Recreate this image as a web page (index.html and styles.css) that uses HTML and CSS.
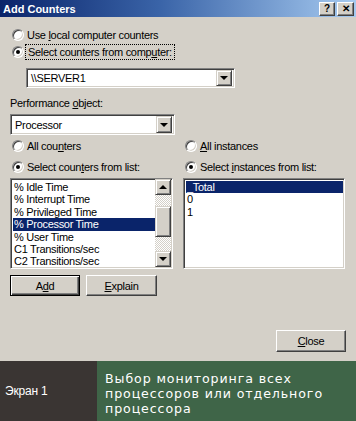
FILE: index.html
```html
<!DOCTYPE html>
<html lang="ru">
<head>
  <meta charset="UTF-8" />
  <title>Add Counters</title>
  <link rel="stylesheet" href="styles.css">
</head>
<body>

<div class="window">
  <div class="titlebar">
    <span class="title">Add Counters</span>
    <span class="tbtn">?</span>
    <span class="tbtn close">&#x2715;</span>
  </div>

  <div class="dialog">
    <div class="opt"><span class="radio"></span><span>Use <u>l</u>ocal computer counters</span></div>
    <div class="opt"><span class="radio on"></span><span class="focus">Select counters from comp<u>u</u>ter:</span></div>

    <div class="combo server">
      <span class="val">\\SERVER1</span>
      <span class="drop"><i class="down"></i></span>
    </div>

    <div class="label">Performance <u>o</u>bject:</div>
    <div class="combo object">
      <span class="val">Processor</span>
      <span class="drop"><i class="down"></i></span>
    </div>

    <div class="cols">
      <div class="col">
        <div class="opt"><span class="radio"></span><span>All cou<u>n</u>ters</span></div>
        <div class="opt"><span class="radio on"></span><span>Select coun<u>t</u>ers from list:</span></div>
        <div class="list">
          <div class="items">
            <div>% Idle Time</div>
            <div>% Interrupt Time</div>
            <div>% Privileged Time</div>
            <div class="sel">% Processor Time</div>
            <div>% User Time</div>
            <div>C1 Transitions/sec</div>
            <div>C2 Transitions/sec</div>
          </div>
          <div class="scroll">
            <span class="sbtn"><i class="up"></i></span>
            <span class="track"></span>
            <span class="thumb"></span>
            <span class="track short"></span>
            <span class="sbtn"><i class="down"></i></span>
          </div>
        </div>
      </div>
      <div class="col">
        <div class="opt"><span class="radio"></span><span><u>A</u>ll instances</span></div>
        <div class="opt"><span class="radio on"></span><span>Select <u>i</u>nstances from list:</span></div>
        <div class="list">
          <div class="items">
            <div class="sel">_Total</div>
            <div>0</div>
            <div>1</div>
          </div>
        </div>
      </div>
    </div>

    <div class="actions">
      <span class="btn default">A<u>d</u>d</span>
      <span class="btn"><u>E</u>xplain</span>
    </div>

    <div class="footer">
      <span class="btn"><u>C</u>lose</span>
    </div>
  </div>
</div>

<div class="caption">
  <div class="screen-no">Экран 1</div>
  <div class="note">Выбор мониторинга всех<br>процессоров или отдельного<br>процессора</div>
</div>

</body>
</html>
```

FILE: styles.css
```css
body {
  margin: 0;
  width: 356px;
  height: 421px;
  overflow: hidden;
  background: #d4d0c8;
  font-family: "Liberation Sans", Arial, sans-serif;
  font-size: 11px;
  letter-spacing: -0.3px;
  color: #000;
}
u { text-decoration: underline; text-underline-offset: 1px; }

.window { height: 361px; background: #d4d0c8; display: flex; flex-direction: column; }

.titlebar {
  height: 17px;
  display: flex;
  align-items: center;
  padding: 0 2px 0 3px;
  background: linear-gradient(90deg, #0a246a, #3a64a8 45%, #a6caf0);
}
.title { flex: 1; color: #fff; font-weight: bold; font-size: 11px; letter-spacing: 0; }
.tbtn {
  width: 14px;
  height: 12px;
  margin-left: 2px;
  background: #d4d0c8;
  border: 1px solid;
  border-color: #fff #404040 #404040 #fff;
  box-shadow: inset -1px -1px #808080;
  font-weight: bold;
  font-size: 10px;
  line-height: 12px;
  text-align: center;
  letter-spacing: 0;
}
.tbtn.close { width: 15px; font-size: 10px; }

.dialog { flex: 1; padding: 10px 10px 0 10px; display: flex; flex-direction: column; }

.opt { height: 16px; display: flex; align-items: center; gap: 3px; padding-left: 2px; }
.opt + .opt { margin-top: 1px; }
.radio {
  width: 10px;
  height: 10px;
  border-radius: 50%;
  background: #fff;
  border: 1px solid;
  border-color: #808080 #fff #fff #808080;
  box-shadow: inset 1px 1px #404040, inset -1px -1px #d4d0c8;
  display: flex;
  align-items: center;
  justify-content: center;
  flex: none;
}
.radio.on::after { content: ""; width: 4px; height: 4px; border-radius: 50%; background: #000; }
.focus { outline: 1px dotted #000; outline-offset: 1px; padding: 0 1px; }

.combo {
  height: 16px;
  display: flex;
  align-items: center;
  background: #fff;
  border: 1px solid;
  border-color: #808080 #fff #fff #808080;
  box-shadow: inset 1px 1px #404040, inset -1px -1px #d4d0c8;
  padding: 1px 2px 1px 2px;
  box-sizing: content-box;
}
.combo .val { flex: 1; padding-left: 2px; }
.combo.server { width: 203px; margin: 8px 0 0 16px; }
.combo.object { width: 159px; height: 17px; }
.drop {
  width: 14px;
  height: 14px;
  background: #d4d0c8;
  border: 1px solid;
  border-color: #d4d0c8 #404040 #404040 #d4d0c8;
  box-shadow: inset 1px 1px #fff, inset -1px -1px #808080;
  display: flex;
  align-items: center;
  justify-content: center;
}
.combo.object .drop { height: 15px; }
i.down, i.up { width: 0; height: 0; border-left: 4px solid transparent; border-right: 4px solid transparent; }
i.down { border-top: 4px solid #000; }
i.up { border-bottom: 4px solid #000; }

.label { height: 14px; line-height: 14px; margin: 8px 0 4px; }

.cols { display: grid; grid-template-columns: 163px 162px; column-gap: 10px; margin-top: 3px; }
.col .opt + .opt { margin-top: 5px; }

.list {
  margin-top: 3px;
  height: 87px;
  display: flex;
  background: #fff;
  border: 1px solid;
  border-color: #808080 #fff #fff #808080;
  box-shadow: inset 1px 1px #404040, inset -1px -1px #d4d0c8;
  padding: 1px 1px 1px 2px;
}
.items { flex: 1; padding-top: 1px; }
.items div { height: 12.4px; line-height: 12.4px; padding-left: 1px; white-space: nowrap; }
.items .sel { background: #0a246a; color: #fff; }

.scroll { width: 16px; display: flex; flex-direction: column; margin-top: -1px; }
.sbtn {
  height: 14px;
  background: #d4d0c8;
  border: 1px solid;
  border-color: #d4d0c8 #404040 #404040 #d4d0c8;
  box-shadow: inset 1px 1px #fff, inset -1px -1px #808080;
  display: flex;
  align-items: center;
  justify-content: center;
}
.track { flex: 1; background: repeating-conic-gradient(#fff 0 25%, #d4d0c8 0 50%) 0 0 / 2px 2px; }
.track.short { flex: none; height: 14px; }
.thumb {
  height: 29px;
  background: #d4d0c8;
  border: 1px solid;
  border-color: #d4d0c8 #404040 #404040 #d4d0c8;
  box-shadow: inset 1px 1px #fff, inset -1px -1px #808080;
}

.btn {
  width: 70px;
  height: 21px;
  box-sizing: border-box;
  display: flex;
  align-items: center;
  justify-content: center;
  background: #d4d0c8;
  border: 1px solid;
  border-color: #fff #404040 #404040 #fff;
  box-shadow: inset -1px -1px #808080, inset 1px 1px #d4d0c8;
}
.btn.default { border: 1px solid #000; box-shadow: inset 1px 1px #fff, inset -1px -1px #404040, inset -2px -2px #808080; }
.actions { display: flex; gap: 6px; margin-top: 6px; }
.actions .btn:last-child { width: 71px; }

.footer { display: flex; justify-content: flex-end; margin-top: 34px; padding-right: 0; }
.footer .btn { height: 22px; }

.caption { height: 60px; display: flex; }
.screen-no {
  width: 92px;
  padding-left: 5px;
  background: #3a3533;
  color: #fff;
  font-size: 12px;
  letter-spacing: -0.2px;
  display: flex;
  align-items: center;
}
.note {
  flex: 1;
  background: #3f6548;
  color: #fff;
  font-family: "DejaVu Sans", sans-serif;
  font-size: 12.6px;
  letter-spacing: 0.9px;
  line-height: 15px;
  padding: 10px 0 0 8px;
}
```
